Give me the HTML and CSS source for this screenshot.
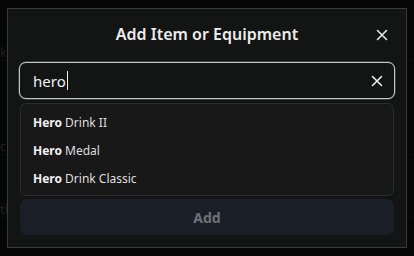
FILE: index.html
```html
<!DOCTYPE html>
<html lang="en">
<head>
<meta charset="utf-8">
<title>Add Item or Equipment</title>
<link rel="stylesheet" href="styles.css">
</head>
<body>
  <div class="page">
    <div class="page-row r1">ks</div>
    <div class="page-row r2">cl</div>
    <div class="page-row r3">tl</div>
  </div>

  <div class="backdrop">
    <div class="modal" role="dialog" aria-label="Add Item or Equipment">
      <div class="modal-header">
        <h2 class="modal-title">Add Item or Equipment</h2>
        <button class="icon-btn close-btn" aria-label="Close">
          <svg width="12" height="12" viewBox="0 0 12 12"><path d="M1.5 1.5 L10.5 10.5 M10.5 1.5 L1.5 10.5" stroke="#e6e6e6" stroke-width="1.6" stroke-linecap="round"/></svg>
        </button>
      </div>

      <div class="search">
        <span class="search-text">hero</span><span class="caret"></span>
        <button class="icon-btn clear-btn" aria-label="Clear">
          <svg width="12" height="12" viewBox="0 0 12 12"><path d="M1.5 1.5 L10.5 10.5 M10.5 1.5 L1.5 10.5" stroke="#f0f0f0" stroke-width="1.6" stroke-linecap="round"/></svg>
        </button>
      </div>

      <ul class="results">
        <li class="result"><b>Hero</b> Drink II</li>
        <li class="result"><b>Hero</b> Medal</li>
        <li class="result"><b>Hero</b> Drink Classic</li>
      </ul>

      <button class="add-btn" disabled>Add</button>
    </div>
  </div>
</body>
</html>
```

FILE: styles.css
```css
* { box-sizing: border-box; }

html, body {
  margin: 0;
  padding: 0;
  width: 414px;
  height: 256px;
  overflow: hidden;
  background: #0c0c0c;
  font-family: "Noto Sans", "Open Sans", sans-serif;
}

.page {
  display: flex;
  flex-direction: column;
}

.page-row {
  color: #3a3a3a;
  font-size: 13px;
  line-height: 16px;
  border-bottom: 1px solid #141414;
}

.r1 { margin-top: 44px; }
.r2 { margin-top: 77px; }
.r3 { margin-top: 46px; }

.backdrop {
  position: fixed;
  inset: 0;
  background: rgba(0, 0, 0, 0.45);
  padding: 8px 0 0 7px;
}

.modal {
  width: 400px;
  height: 240px;
  background: #131414;
  border: 1px solid #3a3a3a;
  display: flex;
  flex-direction: column;
  padding: 0 11px 0 11px;
}

.modal-header {
  position: relative;
  display: flex;
  justify-content: center;
  align-items: center;
  height: 48px;
  padding-top: 2px;
}

.modal-title {
  margin: 0;
  font-size: 16px;
  font-weight: 600;
  color: #ececec;
  line-height: 24px;
}

.icon-btn {
  background: none;
  border: none;
  padding: 0;
  display: flex;
  align-items: center;
  justify-content: center;
  cursor: pointer;
}

.close-btn {
  position: absolute;
  right: 6px;
  top: 19px;
  width: 14px;
  height: 14px;
}

.search {
  position: relative;
  margin-top: 5px;
  height: 37px;
  border: 1px solid #c3c6cb;
  box-shadow: 0 0 0 0.5px rgba(195, 198, 203, 0.5);
  border-radius: 7px;
  display: flex;
  align-items: center;
  padding-left: 13px;
  background: #131414;
}

.search-text {
  color: #f2f2f2;
  font-size: 15px;
  line-height: 20px;
}

.caret {
  display: inline-block;
  width: 1px;
  height: 19px;
  background: #f2f2f2;
  margin-left: 1px;
}

.clear-btn {
  position: absolute;
  right: 10px;
  top: 11px;
  width: 14px;
  height: 14px;
}

.results {
  list-style: none;
  margin: 4px 1px 0 1px;
  padding: 5px 0 2px 0;
  border: 1px solid #2c2c2c;
  border-radius: 6px;
  background: #181818;
}

.result {
  height: 28px;
  line-height: 28px;
  padding-left: 12px;
  font-size: 12px;
  color: #dedede;
}

.result b {
  font-weight: 700;
  color: #f2f2f2;
}

.add-btn {
  margin: 3px 1px 0 1px;
  height: 36px;
  border: none;
  border-radius: 7px;
  background: #1a1f27;
  color: #6f7277;
  font-family: inherit;
  font-size: 14px;
  font-weight: 700;
}
```
